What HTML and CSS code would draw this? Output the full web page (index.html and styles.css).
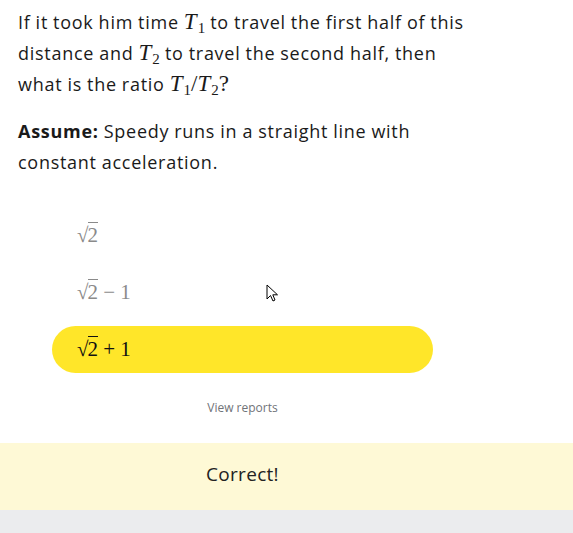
FILE: index.html
```html
<!DOCTYPE html>
<html>
<head>
<meta charset="utf-8">
<link rel="stylesheet" href="styles.css">
</head>
<body>
<div class="page">
  <div class="main">
    <p class="q">If it took him time <span class="m"><i>T</i><sub>1</sub></span> to travel the first half of this distance and <span class="m"><i>T</i><sub>2</sub></span> to travel the second half, then what is the ratio <span class="m"><i>T</i><sub>1</sub>/<i>T</i><sub>2</sub>?</span></p>
    <p class="q assume"><b>Assume:</b> Speedy runs in a straight line with constant acceleration.</p>
    <div class="options">
      <div class="opt"><span class="m">√<span class="rad">2</span></span></div>
      <div class="opt"><span class="m">√<span class="rad">2</span> − 1</span></div>
      <div class="opt sel"><span class="m">√<span class="rad">2</span> + 1</span></div>
    </div>
    <div class="reports">View reports</div>
  </div>
  <div class="result"><div class="result-in">Correct!</div></div>
  <div class="footer"></div>
</div>
<svg class="cursor" width="14" height="20" viewBox="0 0 14 20"><path d="M1 1 L1 15 L4.5 11.5 L7 17 L9 16 L6.8 10.8 L11.5 10.8 Z" fill="#fff" stroke="#000" stroke-width="1"/></svg>
</body>
</html>
```
FILE: styles.css
```css
html, body { margin: 0; padding: 0; background: #fff; }
body { font-family: "Open Sans", "Noto Sans", sans-serif; color: #1a1a1a; width: 573px; height: 533px; overflow: hidden; position: relative; }
.main { width: 449px; padding: 0 18px; }
.q { margin: 0; font-size: 18px; line-height: 31px; padding-top: 7px; letter-spacing: 0.72px; word-spacing: -0.3px; }
.assume { padding-top: 16px; }
.m { font-family: "Liberation Serif", "DejaVu Serif", serif; font-size: 23px; letter-spacing: 0; line-height: 1; }
.m i { padding-right: 1px; }
.m sub { font-size: 15px; vertical-align: -4px; line-height: 1; }
.options { padding: 34px 34px 0; display: flex; flex-direction: column; gap: 10px; }
.opt { height: 47px; display: flex; align-items: center; padding: 0 25px; border-radius: 24px; color: #8a8a8a; }
.opt .m { font-size: 21px; line-height: 1; }
.rad { border-top: 1px solid currentColor; padding-top: 0; margin-left: -1px; }
.opt.sel { background: #ffe629; color: #111; }
.reports { text-align: center; font-size: 12px; color: #707378; margin-top: 26px; height: 17px; }
.result { background: #fef9d6; height: 67px; margin-top: 27px; }
.result-in { width: 485px; text-align: center; font-size: 19px; line-height: 63px; color: #222; letter-spacing: 0.3px; }
.footer { background: #ebecee; height: 23px; }
.cursor { position: absolute; left: 266px; top: 284px; }
```
